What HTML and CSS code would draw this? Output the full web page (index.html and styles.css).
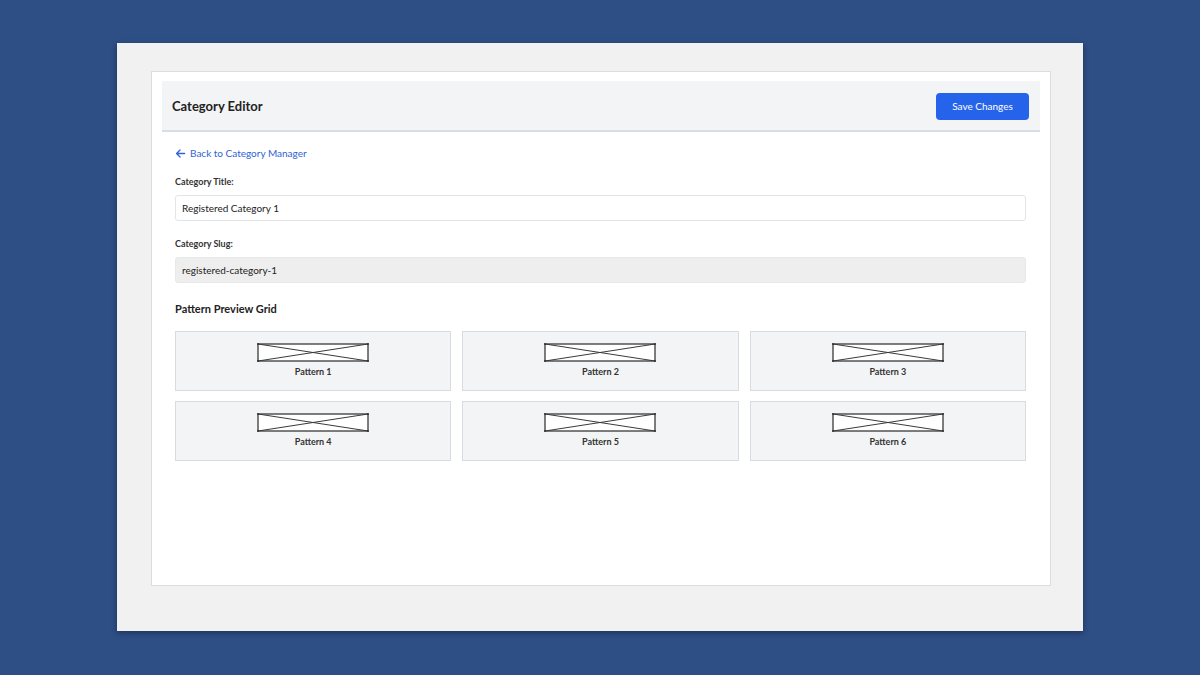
FILE: index.html
```html
<!DOCTYPE html>
<html>
<head>
<meta charset="utf-8">
<link rel="stylesheet" href="styles.css">
</head>
<body>
<div class="card">
  <div class="panel">
    <div class="header">
      <h1 class="title">Category Editor</h1>
      <button class="save">Save Changes</button>
    </div>
    <div class="content">
      <a class="back" href="#"><svg class="arrow" viewBox="0 0 12 12" width="11" height="11"><path d="M10.5 6H1.8M5.5 2.2L1.7 6l3.8 3.8" fill="none" stroke="currentColor" stroke-width="1.4" stroke-linecap="round" stroke-linejoin="round"/></svg>Back to Category Manager</a>
      <div class="field">
        <div class="label">Category Title:</div>
        <div class="input">Registered Category 1</div>
      </div>
      <div class="field">
        <div class="label">Category Slug:</div>
        <div class="input slug">registered-category-1</div>
      </div>
      <h2 class="section">Pattern Preview Grid</h2>
      <div class="grid">
        <div class="tile"><svg class="ph" viewBox="0 0 112 19" width="112" height="19"><rect x="1" y="1" width="110" height="17" fill="#fff" stroke="#3a3a3a" stroke-width="1.3"/><path d="M1 1L111 18M1 18L111 1" stroke="#3a3a3a" stroke-width="1"/><g fill="#333"><circle cx="1" cy="1" r="1"/><circle cx="111" cy="1" r="1"/><circle cx="1" cy="18" r="1"/><circle cx="111" cy="18" r="1"/></g></svg><div class="name">Pattern 1</div></div>
        <div class="tile"><svg class="ph" viewBox="0 0 112 19" width="112" height="19"><rect x="1" y="1" width="110" height="17" fill="#fff" stroke="#3a3a3a" stroke-width="1.3"/><path d="M1 1L111 18M1 18L111 1" stroke="#3a3a3a" stroke-width="1"/><g fill="#333"><circle cx="1" cy="1" r="1"/><circle cx="111" cy="1" r="1"/><circle cx="1" cy="18" r="1"/><circle cx="111" cy="18" r="1"/></g></svg><div class="name">Pattern 2</div></div>
        <div class="tile"><svg class="ph" viewBox="0 0 112 19" width="112" height="19"><rect x="1" y="1" width="110" height="17" fill="#fff" stroke="#3a3a3a" stroke-width="1.3"/><path d="M1 1L111 18M1 18L111 1" stroke="#3a3a3a" stroke-width="1"/><g fill="#333"><circle cx="1" cy="1" r="1"/><circle cx="111" cy="1" r="1"/><circle cx="1" cy="18" r="1"/><circle cx="111" cy="18" r="1"/></g></svg><div class="name">Pattern 3</div></div>
        <div class="tile"><svg class="ph" viewBox="0 0 112 19" width="112" height="19"><rect x="1" y="1" width="110" height="17" fill="#fff" stroke="#3a3a3a" stroke-width="1.3"/><path d="M1 1L111 18M1 18L111 1" stroke="#3a3a3a" stroke-width="1"/><g fill="#333"><circle cx="1" cy="1" r="1"/><circle cx="111" cy="1" r="1"/><circle cx="1" cy="18" r="1"/><circle cx="111" cy="18" r="1"/></g></svg><div class="name">Pattern 4</div></div>
        <div class="tile"><svg class="ph" viewBox="0 0 112 19" width="112" height="19"><rect x="1" y="1" width="110" height="17" fill="#fff" stroke="#3a3a3a" stroke-width="1.3"/><path d="M1 1L111 18M1 18L111 1" stroke="#3a3a3a" stroke-width="1"/><g fill="#333"><circle cx="1" cy="1" r="1"/><circle cx="111" cy="1" r="1"/><circle cx="1" cy="18" r="1"/><circle cx="111" cy="18" r="1"/></g></svg><div class="name">Pattern 5</div></div>
        <div class="tile"><svg class="ph" viewBox="0 0 112 19" width="112" height="19"><rect x="1" y="1" width="110" height="17" fill="#fff" stroke="#3a3a3a" stroke-width="1.3"/><path d="M1 1L111 18M1 18L111 1" stroke="#3a3a3a" stroke-width="1"/><g fill="#333"><circle cx="1" cy="1" r="1"/><circle cx="111" cy="1" r="1"/><circle cx="1" cy="18" r="1"/><circle cx="111" cy="18" r="1"/></g></svg><div class="name">Pattern 6</div></div>
      </div>
    </div>
  </div>
</div>
</body>
</html>
```
FILE: styles.css
```css
* { box-sizing: border-box; }
html, body { margin: 0; padding: 0; }
body {
  width: 1200px;
  height: 675px;
  overflow: hidden;
  background: #2e4e86;
  font-family: Lato, "Open Sans", sans-serif;
  color: #222;
  padding-top: 43px;
}
.card {
  width: 966px;
  height: 588px;
  margin: 0 0 0 117px;
  background: #f1f1f1;
  padding: 28px 32px 45px 34px;
  box-shadow: 0 2px 6px rgba(0,0,0,0.35);
}
.panel {
  height: 100%;
  background: #fff;
  border: 1px solid #dddddd;
  padding: 9px 10px;
}
.header {
  height: 51px;
  background: #f3f4f6;
  border-bottom: 2px solid #d9dce3;
  display: flex;
  align-items: center;
  justify-content: space-between;
  padding: 0 11px 0 10px;
}
.title {
  margin: 0;
  font-size: 13px;
  font-weight: 700;
  color: #222;
}
.save {
  font-family: inherit;
  background: #2563eb;
  color: #fff;
  border: none;
  border-radius: 4px;
  width: 93px;
  height: 27px;
  font-size: 10px;
  padding: 0;
  margin-top: 1px;
}
.content {
  padding: 14px 14px 0 13px;
}
.back {
  display: flex;
  align-items: center;
  gap: 4px;
  color: #2f62d6;
  text-decoration: none;
  font-size: 10px;
  line-height: 14px;
}
.arrow { display: block; }
.field { margin-top: 16px; }
.field + .field { margin-top: 17px; }
.label {
  font-size: 9px;
  font-weight: 700;
  color: #333;
  line-height: 12px;
  margin-bottom: 7px;
}
.input {
  height: 26px;
  border: 1px solid #e2e4e8;
  border-radius: 3px;
  font-size: 10px;
  line-height: 24px;
  padding: 0 6px;
  color: #222;
}
.input.slug {
  background: #eeeeee;
  border-color: #e8e8e8;
}
.section {
  margin: 19px 0 0;
  font-size: 11px;
  font-weight: 700;
  line-height: 14px;
  color: #222;
}
.grid {
  margin-top: 15px;
  display: grid;
  grid-template-columns: repeat(3, 1fr);
  column-gap: 11px;
  row-gap: 10px;
}
.tile {
  height: 60px;
  background: #f3f4f6;
  border: 1px solid #d8dbe0;
  display: flex;
  flex-direction: column;
  align-items: center;
  padding-top: 11px;
}
.ph { display: block; }
.name {
  margin-top: 4px;
  font-size: 9px;
  font-weight: 700;
  color: #333;
  line-height: 12px;
}
```
